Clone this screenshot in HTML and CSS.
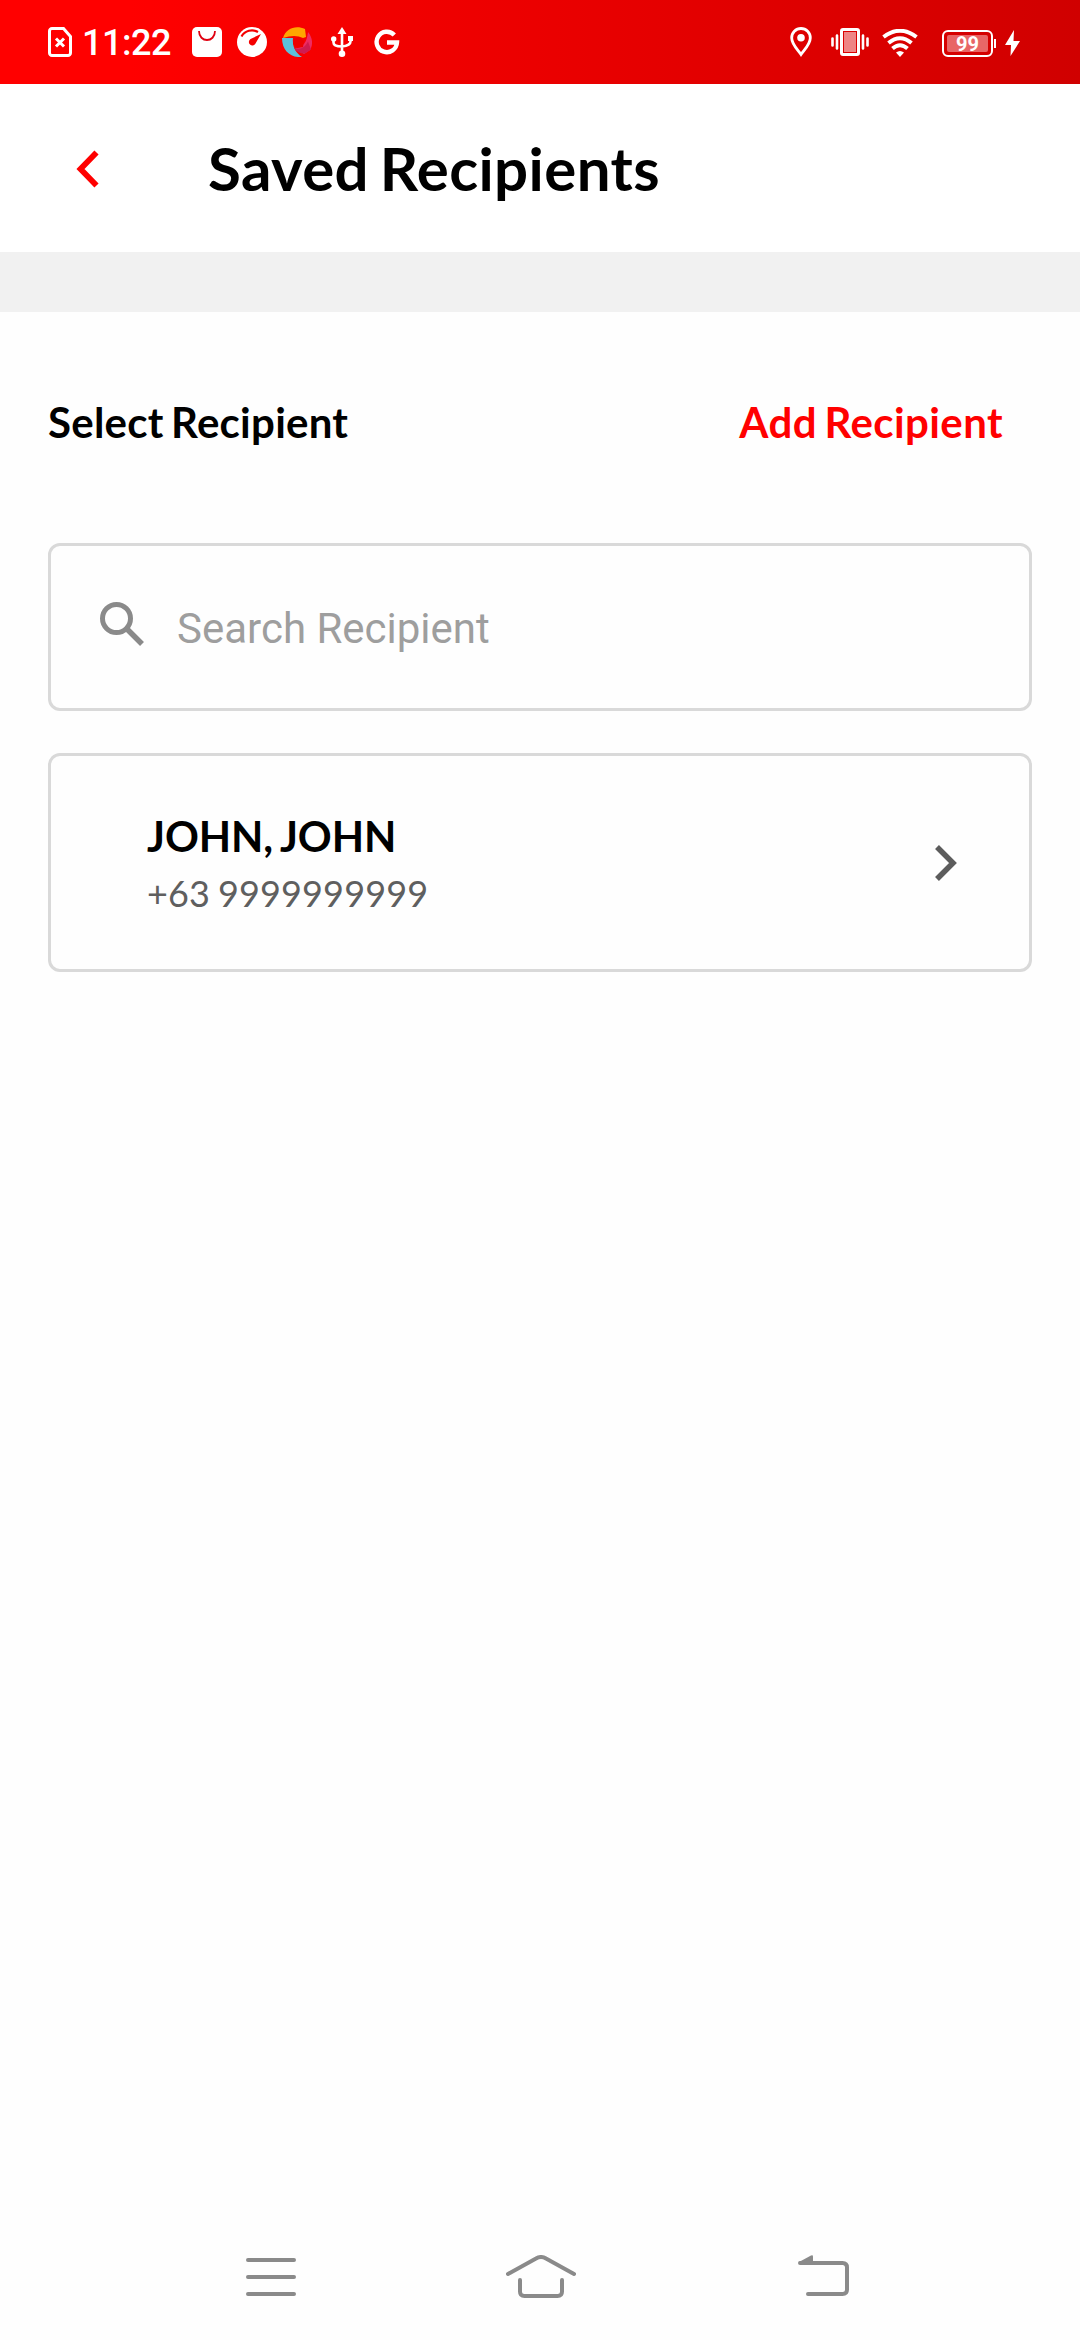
FILE: index.html
```html
<!DOCTYPE html>
<html lang="en">
<head>
<meta charset="utf-8">
<title>Saved Recipients</title>
<link rel="stylesheet" href="styles.css">
</head>
<body>
<div class="screen">
  <div class="status-bar">
    <div class="status-left">
      <svg class="icon-sim" width="24" height="30" viewBox="0 0 24 30"><path d="M4 1.500h11.500l7 8V26a2.500 2.500 0 0 1-2.500 2.500H4A2.500 2.500 0 0 1 1.500 26V4A2.500 2.500 0 0 1 4 1.500z" fill="none" stroke="#fff" stroke-width="3"/><path d="M8 11.500l8 8M16 11.500l-8 8" stroke="#fff" stroke-width="3"/></svg>
      <span class="time">11:22</span>
      <div class="notifications">
        <svg width="30" height="30" viewBox="0 0 30 30"><rect width="30" height="30" rx="5" fill="#fff"/><path d="M7 4c0 12 16 12 16 0" fill="none" stroke="#e00010" stroke-width="1.800"/></svg>
        <svg width="30" height="30" viewBox="0 0 30 30"><circle cx="15" cy="15" r="15" fill="#fff"/><path d="M4.500 9.500A12 12 0 0 1 21 5" fill="none" stroke="#f40000" stroke-width="2.200"/><path d="M24 7l-5.500 9.500a3.500 3.500 0 1 1-5-4.500z" fill="#f40000"/></svg>
        <svg width="30" height="30" viewBox="0 0 30 30"><path d="M0 11h11c-1 9 3 15 9 19C9 31 0 24 0 11z" fill="#5cc0da"/><path d="M26 5c5 6 5 13 2 18l-6 4-9-6c8 0 12-6 13-16z" fill="#ee2b62"/><path d="M12 20.500c6 3 11 0 14-6l3 8-6 4c-5 0-9-2-11-6z" fill="#cf1c50"/><path d="M1 11C4 1 14-2 23 2l1 8-3 1q-8-4-20 0z" fill="#ffa500"/><path d="M12 12l5-2 5 4-1 6-6 1-4-4z" fill="#ed0000"/></svg>
        <svg class="icon-usb" width="22" height="30" viewBox="0 0 22 30"><path d="M11 6v20M2.500 13v2.500q0 4 8.500 4 8.500-1 8.500-5V11" fill="none" stroke="#fff" stroke-width="2.600"/><path d="M11 0l4.500 7h-9z" fill="#fff"/><rect x="17" y="9" width="5" height="5" fill="#fff"/><circle cx="2.700" cy="12" r="2.700" fill="#fff"/><circle cx="11" cy="26.700" r="3.300" fill="#fff"/></svg>
        <svg class="icon-g" width="26" height="26" viewBox="0 0 26 26"><path d="M20.300 6A10.200 10.200 0 1 0 23 13.500H13" fill="none" stroke="#fff" stroke-width="4.400"/></svg>
      </div>
    </div>
    <div class="status-right">
      <svg class="icon-pin" width="22" height="30" viewBox="0 0 22 30"><path d="M11 1.500A9.300 9.300 0 0 0 1.700 11C1.700 17 7 22 11 27.500 15 22 20.300 17 20.300 11A9.300 9.300 0 0 0 11 1.500z" fill="none" stroke="#fff" stroke-width="2.800"/><circle cx="11" cy="10.800" r="3.800" fill="#fff"/></svg>
      <svg class="icon-vibrate" width="38" height="28" viewBox="0 0 38 28"><rect x="10.500" y="1.500" width="17" height="25" rx="1.500" fill="none" stroke="#fff" stroke-width="3"/><rect x="13" y="4" width="12" height="20" fill="#ee8585"/><path d="M1.500 10.500v7M6 7.500v13M32 7.500v13M36.500 10.500v7" stroke="#fff" stroke-width="2.600" stroke-linecap="round"/></svg>
      <svg class="icon-wifi" width="36" height="28" viewBox="0 0 36 28"><path d="M1.500 8Q18-4.500 34.500 8M6.500 14Q18 4.500 29.500 14M10.500 19.500Q18 13 25.500 19.500" fill="none" stroke="#fff" stroke-width="4"/><path d="M14 23.500q4-3 8 0l-4 4.500z" fill="#fff"/></svg>
      <div class="battery"><span class="battery-level">99</span></div>
      <svg class="icon-bolt" width="15" height="26" viewBox="0 0 15 26"><path d="M9 0L0 15h6L5.500 26 15 11H8.500z" fill="#fff"/></svg>
    </div>
  </div>

  <header class="header">
    <svg class="back" width="24" height="38" viewBox="0 0 24 38"><path d="M20.500 2.500L4.500 19l16 16.500" fill="none" stroke="#f00" stroke-width="5.800"/></svg>
    <h1 class="title">Saved Recipients</h1>
  </header>
  <div class="divider"></div>

  <main class="content">
    <div class="toolbar">
      <h2 class="section-title">Select Recipient</h2>
      <a class="add-link">Add Recipient</a>
    </div>
    <div class="search">
      <svg class="search-icon" width="44" height="44" viewBox="0 0 44 44"><circle cx="16.500" cy="16.500" r="14" fill="none" stroke="#8a8a8a" stroke-width="5"/><path d="M27 27L42 42" stroke="#8a8a8a" stroke-width="5.500"/></svg>
      <span class="placeholder">Search Recipient</span>
    </div>
    <div class="recipient">
      <div class="recipient-info">
        <div class="name">JOHN, JOHN</div>
        <div class="phone">+63 9999999999</div>
      </div>
      <svg class="chevron" width="22" height="36" viewBox="0 0 22 36"><path d="M2 2l16 16L2 34" fill="none" stroke="#5c5c5c" stroke-width="5.500"/></svg>
    </div>
  </main>

  <nav class="nav-bar">
    <svg width="50" height="38" viewBox="0 0 50 38"><path d="M2 2h46M2 19h46M2 36h46" stroke="#8a8a8a" stroke-width="4" stroke-linecap="round"/></svg>
    <svg class="nav-home" width="70" height="43" viewBox="0 0 70 43"><path d="M2 19L30 3.500Q35 .5 40 3.500L68 19M14 25v11.500q0 4.500 4.500 4.500h33q4.500 0 4.500-4.500V25" fill="none" stroke="#8a8a8a" stroke-width="4" stroke-linecap="round"/></svg>
    <svg class="nav-back" width="51" height="42" viewBox="0 0 51 42"><path d="M2 8h42.500q4.500 0 4.500 4.500v22q0 4.500-4.500 4.500H10" fill="none" stroke="#8a8a8a" stroke-width="4" stroke-linecap="round"/><path d="M1 7L13 .5q2-1 2 1V9H1z" fill="#8a8a8a"/></svg>
  </nav>
</div>
</body>
</html>
```
FILE: styles.css
```css
* { box-sizing: border-box; }
body { margin: 0; background: #fefefe; font-family: Lato, sans-serif; color: #000; }
svg { display: block; flex: none; }
h1, h2 { margin: 0; }

.screen { width: 1080px; height: 2340px; display: flex; flex-direction: column; }

.status-bar {
  height: 84px;
  padding: 0 60px 0 48px;
  display: flex;
  justify-content: space-between;
  background: linear-gradient(90deg, #f00 0%, #f00 12%, #d00000 100%);
  color: #fff;
  font-family: Roboto, sans-serif;
}
.status-left, .status-right, .notifications { display: flex; align-items: center; }
.time { margin-left: 10px; width: 110px; font-size: 36px; font-weight: 500; line-height: 84px; padding-top: 2px; letter-spacing: -0.5px; white-space: nowrap; }
.notifications { gap: 15px; }
.icon-usb { margin-left: 4px; }
.icon-g { margin-left: 6px; }
.icon-vibrate { margin-left: 19px; }
.icon-wifi { margin: 2px 0 0 13px; }
.battery {
  position: relative;
  width: 51px;
  height: 27px;
  margin: 3px 12px 0 24px;
  padding: 3px;
  border: 2px solid #fff;
  border-radius: 6px;
}
.battery::after {
  content: "";
  position: absolute;
  left: 50px;
  top: 7px;
  width: 2px;
  height: 9px;
  background: #fff;
}
.battery-level {
  display: block;
  height: 17px;
  border-radius: 2px;
  background: #e86666;
  font-size: 20px;
  font-weight: 700;
  line-height: 18px;
  text-align: center;
}
.icon-bolt { margin-top: 2px; }

.header { height: 168px; padding-left: 76px; display: flex; align-items: center; background: #fff; }
.back { margin-top: 2px; }
.title { margin-left: 108px; font-size: 60px; font-weight: 700; line-height: 72px; letter-spacing: 0.4px; word-spacing: -4.3px; }
.divider { height: 60px; background: #f1f1f1; }

.content { flex: 1; padding: 80px 48px 0; }
.toolbar { height: 60px; display: flex; align-items: center; justify-content: space-between; }
.section-title, .add-link { font-size: 42px; font-weight: 700; line-height: 60px; letter-spacing: 0.25px; word-spacing: -3px; }
.add-link { margin-right: 29px; letter-spacing: 0.4px; color: #f00; }
.search, .recipient { display: flex; border: 3px solid #d9d9d9; border-radius: 12px; }
.search { height: 168px; margin-top: 91px; padding-left: 49px; align-items: center; }
.search-icon { margin-bottom: 7px; }
.placeholder { margin-left: 33px; padding-top: 3px; font-family: Roboto, sans-serif; font-size: 42px; line-height: 50px; color: #9e9e9e; }
.recipient { height: 219px; margin-top: 42px; padding: 0 72px 0 96px; align-items: center; justify-content: space-between; }
.recipient-info { padding-top: 2px; }
.name { font-size: 42px; font-weight: 700; line-height: 58px; letter-spacing: -0.1px; word-spacing: -2px; }
.phone { font-size: 36px; line-height: 56px; letter-spacing: 0.15px; word-spacing: -1.5px; color: #5f5f5f; }

.nav-bar { height: 126px; padding: 0 231px 0 246px; display: flex; align-items: center; justify-content: space-between; }
.nav-home { margin: 0 12px 1px 0; }
.nav-back { margin-bottom: 2px; }
```
